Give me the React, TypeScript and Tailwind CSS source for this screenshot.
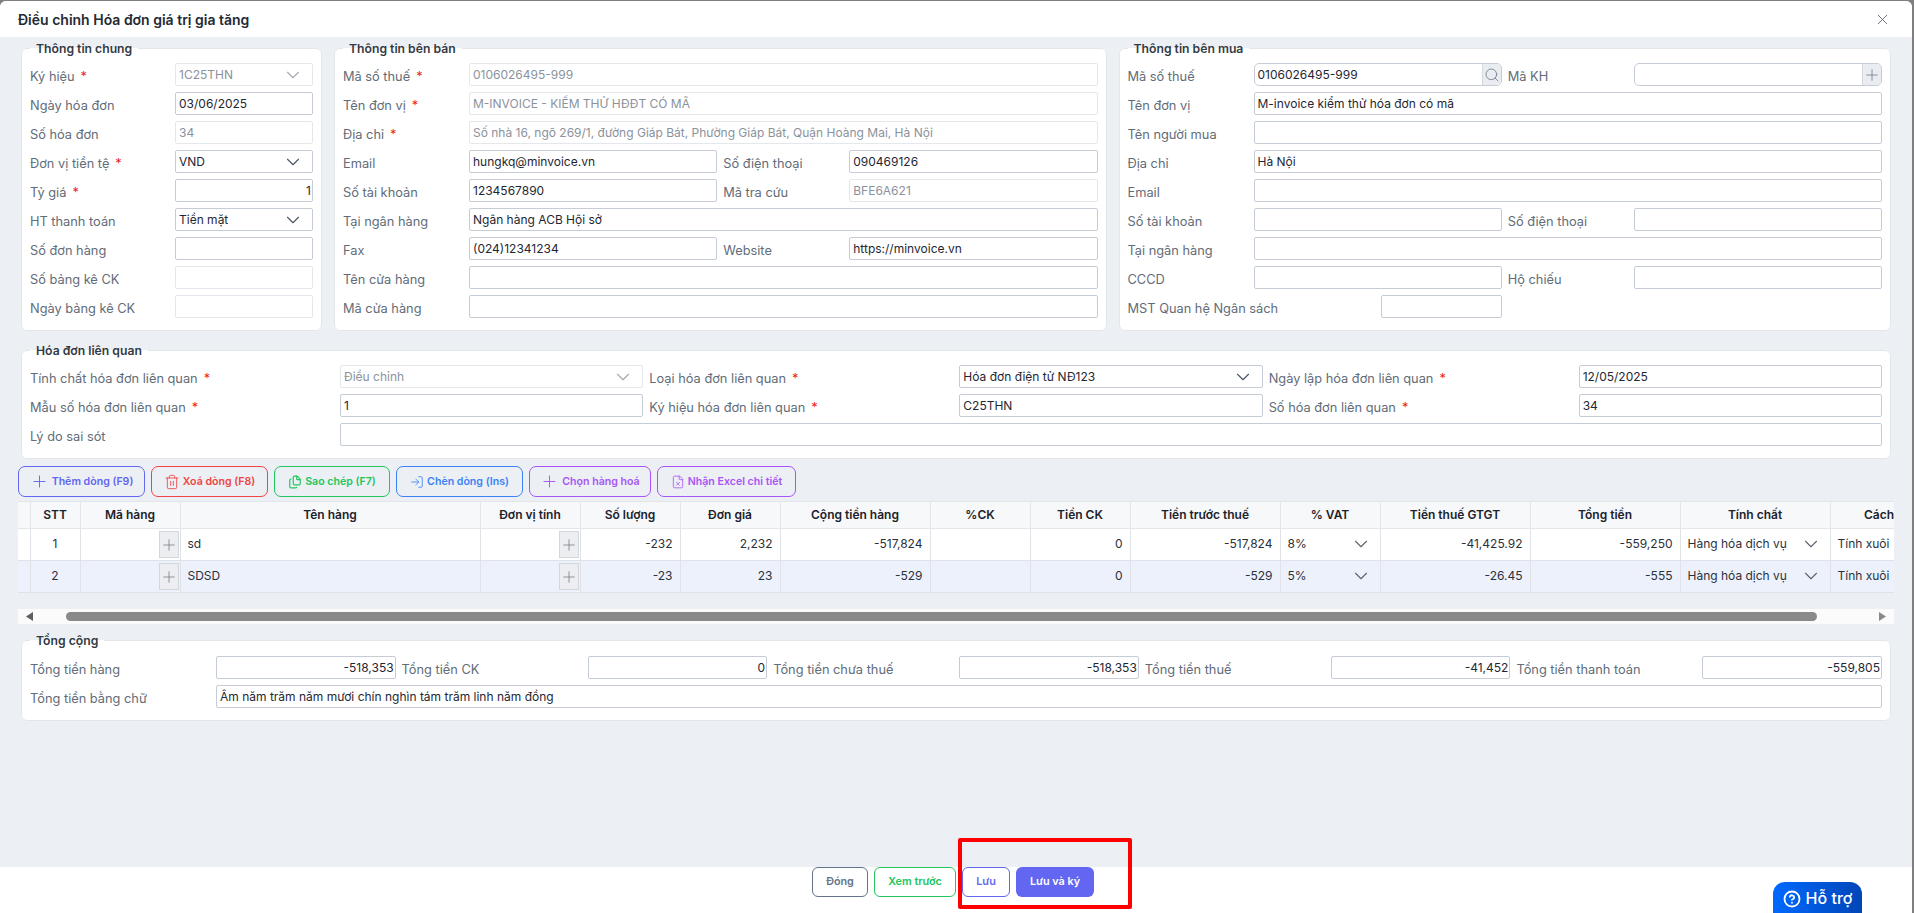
import { ChevronDown, CircleHelp, Files, FileX, LogIn, Plus, Search, Trash2, X } from "lucide-react";
import type { ReactNode } from "react";

const editable = "border-[#c6ccd5] text-[#1f2733]";
const disabled = "border-[#e4e7ec] text-[#8b929c]";

function Label({ text, required }: { text: string; required?: boolean }) {
  return (
    <div className="flex h-[23px] items-center whitespace-nowrap pt-[5px] text-[12.8px] text-[#626c78]">
      {text}
      {required && <span className="ml-[6px] text-[#f01c1c]">*</span>}
    </div>
  );
}

function Field({
  value,
  off,
  select,
  right,
  className = "",
}: {
  value?: string;
  off?: boolean;
  select?: boolean;
  right?: boolean;
  className?: string;
}) {
  return (
    <div
      className={`flex h-[23px] min-w-0 items-center justify-between rounded-[2px] border bg-white pl-[3px] text-[12px] ${off ? disabled : editable} ${className}`}
    >
      <span className={`truncate ${right ? "w-full pr-[1px] text-right" : ""}`}>{value}</span>
      {select && <ChevronDown size={22} strokeWidth={1.2} className={`mr-[8px] shrink-0 ${off ? "text-[#a3a9b2]" : "text-[#4b5563]"}`} />}
    </div>
  );
}

function AddonField({ value, icon }: { value?: string; icon: ReactNode }) {
  return (
    <div className={`flex h-[23px] min-w-0 items-center overflow-hidden rounded-[5px] border bg-white pl-[3px] text-[12px] ${editable}`}>
      <span className="flex-1 truncate">{value}</span>
      <div className="flex h-full w-[19px] items-center justify-center border-l border-[#d5d9df] bg-[#e9ecf0] text-[#6b7480]">{icon}</div>
    </div>
  );
}

function Panel({ title, children, className = "" }: { title: string; children: ReactNode; className?: string }) {
  return (
    <fieldset className={`min-w-0 rounded-[6px] border border-[#e2e6eb] bg-white px-[8px] pb-[12px] pt-[7px] ${className}`}>
      <legend className="px-[6px] text-[12.2px] font-semibold leading-[15px] text-[#333a44]">{title}</legend>
      {children}
    </fieldset>
  );
}

function ToolButton({ label, icon, className }: { label: string; icon: ReactNode; className: string }) {
  return (
    <button className={`flex h-[31px] items-center justify-center gap-[3px] rounded-[7px] border text-[10.6px] font-semibold ${className}`}>
      {icon}
      {label}
    </button>
  );
}

function PlusCell() {
  return (
    <div className="flex h-[27px] items-center justify-end">
      <div className="mr-[1px] flex h-[27px] w-[20px] items-center justify-center border border-[#d3d7dc] bg-[#eceef1] text-[#6f7884]">
        <Plus size={20} strokeWidth={1} />
      </div>
    </div>
  );
}

const columns = [
  { name: "", w: "w-[12px]" },
  { name: "STT", w: "w-[50px]" },
  { name: "Mã hàng", w: "w-[100px]" },
  { name: "Tên hàng", w: "w-[300px]" },
  { name: "Đơn vị tính", w: "w-[100px]" },
  { name: "Số lượng", w: "w-[100px]" },
  { name: "Đơn giá", w: "w-[100px]" },
  { name: "Cộng tiền hàng", w: "w-[150px]" },
  { name: "%CK", w: "w-[100px]" },
  { name: "Tiền CK", w: "w-[100px]" },
  { name: "Tiền trước thuế", w: "w-[150px]" },
  { name: "% VAT", w: "w-[100px]" },
  { name: "Tiền thuế GTGT", w: "w-[150px]" },
  { name: "Tổng tiền", w: "w-[150px]" },
  { name: "Tính chất", w: "w-[150px]" },
  { name: "Cách", w: "w-[64px]" },
];

const rows = [
  { stt: "1", name: "sd", qty: "-232", price: "2,232", sum: "-517,824", ck: "0", pre: "-517,824", vat: "8%", tax: "-41,425.92", total: "-559,250", bg: "bg-white" },
  { stt: "2", name: "SDSD", qty: "-23", price: "23", sum: "-529", ck: "0", pre: "-529", vat: "5%", tax: "-26.45", total: "-555", bg: "bg-[#edf1fb]" },
];

const td = "h-[32px] overflow-hidden whitespace-nowrap border border-[#dfe3e8] px-[7px] pb-[2px] text-[12px] text-[#2a313b]";
const num = `${td} text-right`;
const tight = "h-[32px] border border-[#dfe3e8] p-0";

function InvoiceTable() {
  return (
    <div className="mt-[4px] overflow-hidden">
      <table className="w-[1876px] table-fixed border-collapse">
        <colgroup>
          {columns.map((c, i) => (
            <col key={i} className={c.w} />
          ))}
        </colgroup>
        <thead>
          <tr className="bg-[#f6f8fa]">
            {columns.map((c, i) => (
              <th
                key={i}
                className={`h-[27px] whitespace-nowrap border border-[#e2e6eb] p-0 text-[12px] font-semibold text-[#1c222b] ${i === 0 ? "border-l-0" : ""} ${i === columns.length - 1 ? "border-r-0 text-right" : "text-center"}`}
              >
                {c.name}
              </th>
            ))}
          </tr>
        </thead>
        <tbody>
          {rows.map((r) => (
            <tr key={r.stt} className={r.bg}>
              <td className={`${tight} border-l-0`} />
              <td className={`${td} text-center`}>{r.stt}</td>
              <td className={tight}>
                <PlusCell />
              </td>
              <td className={td}>{r.name}</td>
              <td className={tight}>
                <PlusCell />
              </td>
              <td className={num}>{r.qty}</td>
              <td className={num}>{r.price}</td>
              <td className={num}>{r.sum}</td>
              <td className={num} />
              <td className={num}>{r.ck}</td>
              <td className={num}>{r.pre}</td>
              <td className={td}>
                <div className="flex items-center justify-between">
                  {r.vat}
                  <ChevronDown size={22} strokeWidth={1.2} className="mr-[1px] text-[#5b6470]" />
                </div>
              </td>
              <td className={num}>{r.tax}</td>
              <td className={num}>{r.total}</td>
              <td className={td}>
                <div className="flex items-center justify-between">
                  Hàng hóa dịch vụ
                  <ChevronDown size={22} strokeWidth={1.2} className="mr-[1px] text-[#5b6470]" />
                </div>
              </td>
              <td className={`${td} border-r-0`}>Tính xuôi</td>
            </tr>
          ))}
        </tbody>
      </table>
    </div>
  );
}

function FakeScrollbar() {
  return (
    <div className="mt-[16px] flex h-[15px] items-center bg-[#fbfbfb]">
      <div className="flex w-[48px] justify-start pl-[8px]">
        <svg width="7" height="9" viewBox="0 0 7 9">
          <path d="M7 0v9L0 4.5z" fill="#5f5f5f" />
        </svg>
      </div>
      <div className="h-[9px] flex-1 rounded-full bg-[#8a8a8a]" />
      <div className="flex w-[77px] justify-end pr-[8px]">
        <svg width="7" height="9" viewBox="0 0 7 9">
          <path d="M0 0v9l7-4.5z" fill="#8a8a8a" />
        </svg>
      </div>
    </div>
  );
}

export default function App() {
  return (
    <div className="relative h-[913px] w-[1914px] overflow-hidden bg-[#7f7f7f] pr-[2px] pt-[1px] [font-family:Inter,sans-serif]">
      <div className="flex h-full flex-col overflow-hidden rounded-t-[6px] bg-[#eceff4]">
        <header className="flex h-[36px] shrink-0 items-center justify-between bg-white pl-[18px] pr-[21px]">
          <h1 className="text-[14px] font-semibold text-[#232a33]">Điều chỉnh Hóa đơn giá trị gia tăng</h1>
          <X size={17} strokeWidth={1.2} className="text-[#555c66]" />
        </header>

        <main className="flex-1 overflow-hidden px-[18px] pt-[4px]">
          <div className="px-[3px]">
            <div className="flex gap-[12px]">
              <Panel title="Thông tin chung" className="w-[301px] shrink-0">
                <div className="grid grid-cols-[139px_1fr] gap-x-[6px] gap-y-[6px]">
                  <Label text="Ký hiệu" required />
                  <Field value="1C25THN" off select />
                  <Label text="Ngày hóa đơn" />
                  <Field value="03/06/2025" />
                  <Label text="Số hóa đơn" />
                  <Field value="34" off />
                  <Label text="Đơn vị tiền tệ" required />
                  <Field value="VND" select />
                  <Label text="Tỷ giá" required />
                  <Field value="1" right />
                  <Label text="HT thanh toán" />
                  <Field value="Tiền mặt" select />
                  <Label text="Số đơn hàng" />
                  <Field />
                  <Label text="Số bảng kê CK" />
                  <Field off />
                  <Label text="Ngày bảng kê CK" />
                  <Field off />
                </div>
              </Panel>

              <Panel title="Thông tin bên bán" className="flex-1">
                <div className="grid grid-cols-[120px_1fr_120px_1fr] gap-x-[6px] gap-y-[6px]">
                  <Label text="Mã số thuế" required />
                  <Field value="0106026495-999" off className="col-span-3" />
                  <Label text="Tên đơn vị" required />
                  <Field value="M-INVOICE - KIỂM THỬ HĐĐT CÓ MÃ" off className="col-span-3" />
                  <Label text="Địa chỉ" required />
                  <Field value="Số nhà 16, ngõ 269/1, đường Giáp Bát, Phường Giáp Bát, Quận Hoàng Mai, Hà Nội" off className="col-span-3" />
                  <Label text="Email" />
                  <Field value="hungkq@minvoice.vn" />
                  <Label text="Số điện thoại" />
                  <Field value="090469126" />
                  <Label text="Số tài khoản" />
                  <Field value="1234567890" />
                  <Label text="Mã tra cứu" />
                  <Field value="BFE6A621" off />
                  <Label text="Tại ngân hàng" />
                  <Field value="Ngân hàng ACB Hội sở" className="col-span-3" />
                  <Label text="Fax" />
                  <Field value="(024)12341234" />
                  <Label text="Website" />
                  <Field value="https://minvoice.vn" />
                  <Label text="Tên cửa hàng" />
                  <Field className="col-span-3" />
                  <Label text="Mã cửa hàng" />
                  <Field className="col-span-3" />
                </div>
              </Panel>

              <Panel title="Thông tin bên mua" className="flex-1">
                <div className="grid grid-cols-[120px_1fr_120px_1fr] gap-x-[6px] gap-y-[6px]">
                  <Label text="Mã số thuế" />
                  <AddonField value="0106026495-999" icon={<Search size={16} strokeWidth={1.2} />} />
                  <Label text="Mã KH" />
                  <AddonField icon={<Plus size={20} strokeWidth={1} />} />
                  <Label text="Tên đơn vị" />
                  <Field value="M-invoice kiểm thử hóa đơn có mã" className="col-span-3" />
                  <Label text="Tên người mua" />
                  <Field className="col-span-3" />
                  <Label text="Địa chỉ" />
                  <Field value="Hà Nội" className="col-span-3" />
                  <Label text="Email" />
                  <Field className="col-span-3" />
                  <Label text="Số tài khoản" />
                  <Field />
                  <Label text="Số điện thoại" />
                  <Field />
                  <Label text="Tại ngân hàng" />
                  <Field className="col-span-3" />
                  <Label text="CCCD" />
                  <Field />
                  <Label text="Hộ chiếu" />
                  <Field />
                  <div className="col-span-2 flex gap-[6px]">
                    <div className="flex-1">
                      <Label text="MST Quan hệ Ngân sách" />
                    </div>
                    <Field className="w-[121px]" />
                  </div>
                </div>
              </Panel>
            </div>

            <Panel title="Hóa đơn liên quan" className="mt-[12px]">
              <div className="grid grid-cols-[304px_1fr_304px_1fr_304px_1fr] gap-x-[6px] gap-y-[6px]">
                <Label text="Tính chất hóa đơn liên quan" required />
                <Field value="Điều chỉnh" off select />
                <Label text="Loại hóa đơn liên quan" required />
                <Field value="Hóa đơn điện tử NĐ123" select />
                <Label text="Ngày lập hóa đơn liên quan" required />
                <Field value="12/05/2025" />
                <Label text="Mẫu số hóa đơn liên quan" required />
                <Field value="1" />
                <Label text="Ký hiệu hóa đơn liên quan" required />
                <Field value="C25THN" />
                <Label text="Số hóa đơn liên quan" required />
                <Field value="34" />
                <Label text="Lý do sai sót" />
                <Field className="col-span-5" />
              </div>
            </Panel>
          </div>

          <div className="mt-[7px] flex gap-[6px]">
            <ToolButton label="Thêm dòng (F9)" icon={<Plus size={19} strokeWidth={1.2} />} className="w-[127px] border-[#6366f1] text-[#6366f1]" />
            <ToolButton label="Xoá dòng (F8)" icon={<Trash2 size={16} strokeWidth={1.3} />} className="w-[117px] border-[#ef4444] text-[#ef4444]" />
            <ToolButton label="Sao chép (F7)" icon={<Files size={14} strokeWidth={2} />} className="w-[116px] border-[#22c55e] text-[#22c55e]" />
            <ToolButton label="Chèn dòng (Ins)" icon={<LogIn size={14} strokeWidth={1.4} />} className="w-[127px] border-[#3b82f6] text-[#3b82f6]" />
            <ToolButton label="Chọn hàng hoá" icon={<Plus size={19} strokeWidth={1.2} />} className="w-[122px] border-[#a855f7] text-[#a855f7]" />
            <ToolButton label="Nhận Excel chi tiết" icon={<FileX size={14} strokeWidth={1.4} />} className="w-[139px] border-[#a855f7] text-[#a855f7]" />
          </div>

          <InvoiceTable />
          <FakeScrollbar />

          <div className="mt-[9px] px-[3px]">
            <Panel title="Tổng cộng">
              <div className="mt-[1px] grid grid-cols-[180px_1fr_180px_1fr_180px_1fr_180px_1fr_180px_1fr] gap-x-[6px] gap-y-[6px]">
                <Label text="Tổng tiền hàng" />
                <Field value="-518,353" right />
                <Label text="Tổng tiền CK" />
                <Field value="0" right />
                <Label text="Tổng tiền chưa thuế" />
                <Field value="-518,353" right />
                <Label text="Tổng tiền thuế" />
                <Field value="-41,452" right />
                <Label text="Tổng tiền thanh toán" />
                <Field value="-559,805" right />
                <Label text="Tổng tiền bằng chữ" />
                <Field value="Âm năm trăm năm mươi chín nghìn tám trăm linh năm đồng" className="col-span-9" />
              </div>
            </Panel>
          </div>
        </main>

        <footer className="flex h-[46px] shrink-0 justify-center gap-[6px] bg-white pr-[6px] text-[10.8px] font-semibold">
          <button className="h-[30px] w-[56px] rounded-[6px] border border-[#64748b] text-[#64748b]">Đóng</button>
          <button className="h-[30px] w-[82px] rounded-[6px] border border-[#22c55e] text-[#22c55e]">Xem trước</button>
          <button className="h-[30px] w-[48px] rounded-[6px] border border-[#6366f1] text-[#6366f1]">Lưu</button>
          <button className="h-[30px] w-[78px] rounded-[6px] bg-[#6366f1] text-white">Lưu và ký</button>
        </footer>
      </div>

      <div className="absolute left-[958px] top-[838px] h-[71px] w-[174px] rounded-[2px] border-4 border-[#ff0000]" />

      <div className="absolute left-[1773px] top-[882px] flex h-[40px] w-[89px] items-start justify-center gap-[5px] rounded-t-[12px] bg-linear-to-r from-[#0069ff] to-[#0046b8] pt-[8px] text-[16px] font-medium leading-[17px] text-white">
        <CircleHelp size={18} strokeWidth={2.4} />
        Hỗ trợ
      </div>
    </div>
  );
}
